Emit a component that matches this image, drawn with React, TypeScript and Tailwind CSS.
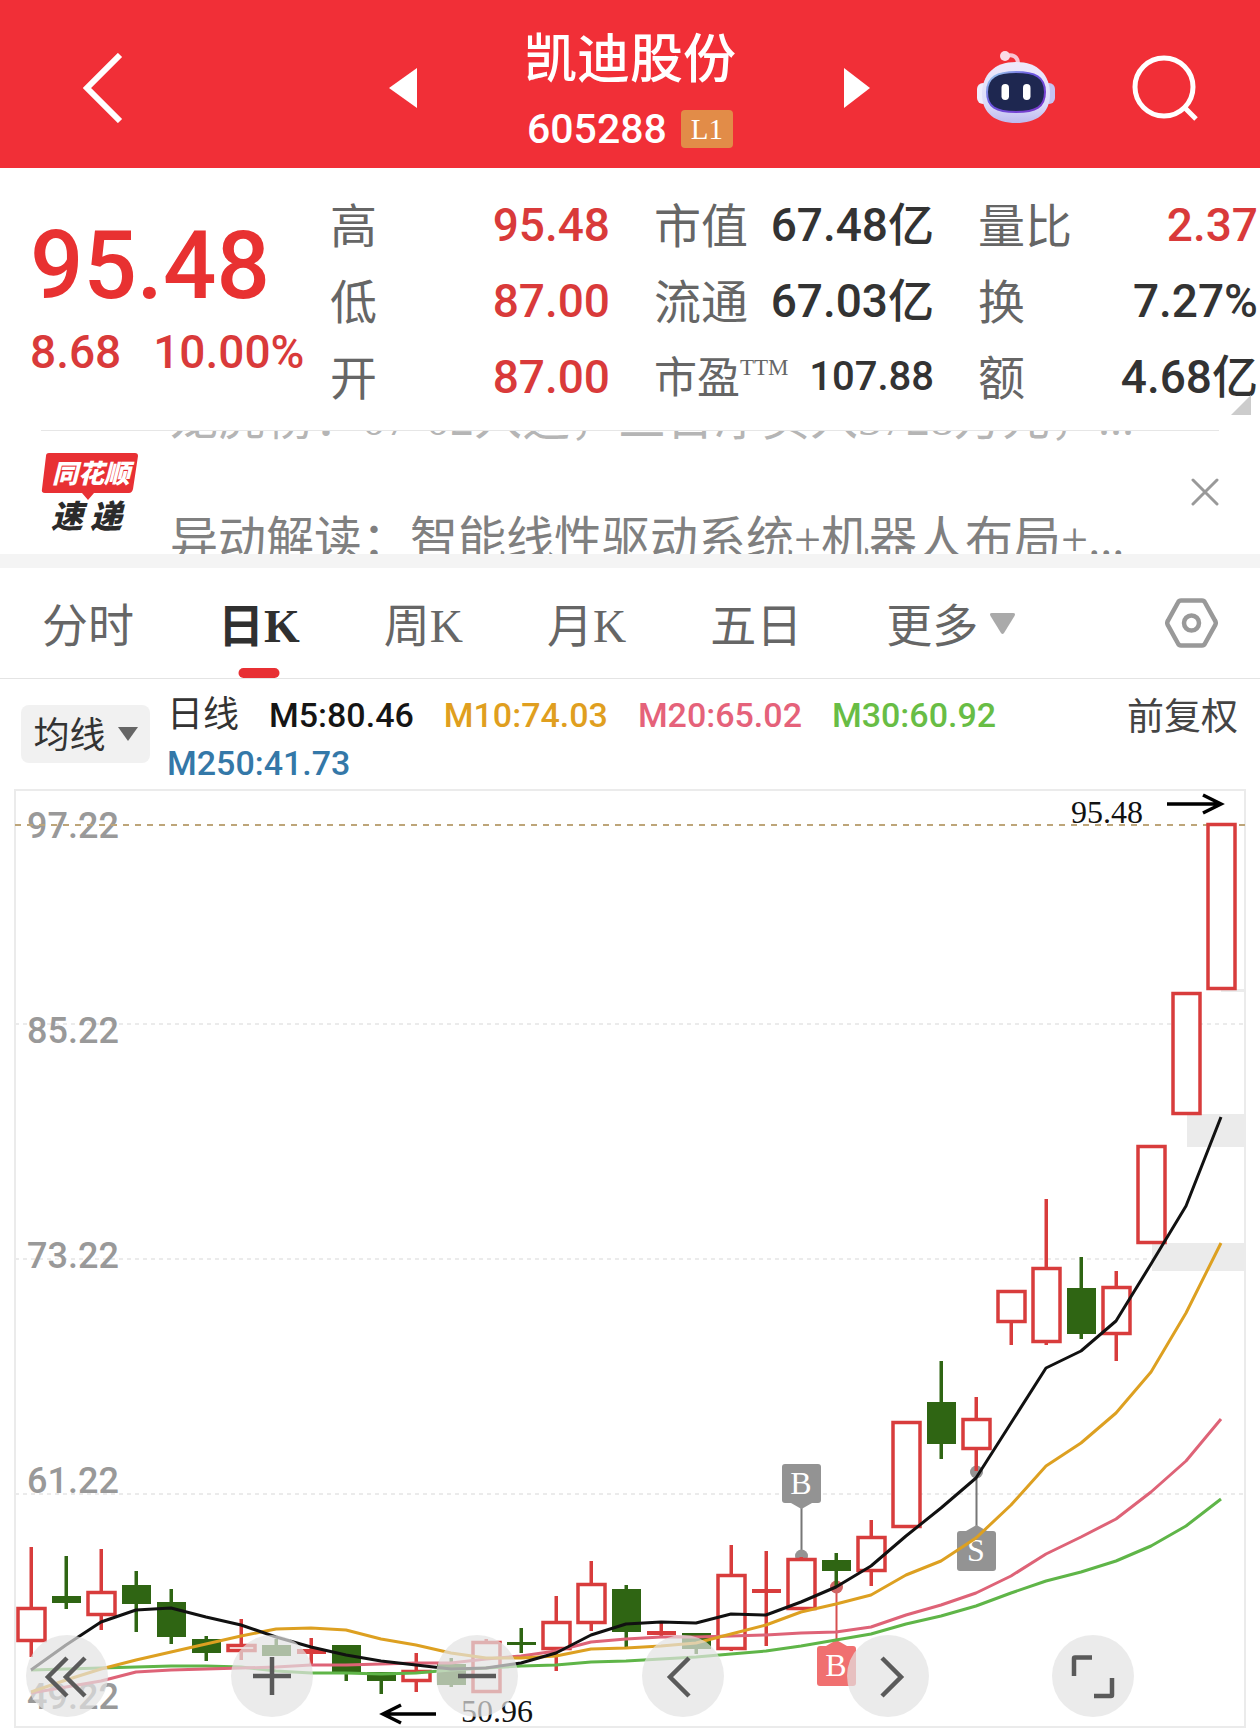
import { useState } from "react";

type Candle = {
  up: boolean;
  high: number;
  top: number;
  bottom: number;
  low: number;
};

const num = "font-['Roboto','Noto_Sans_CJK_SC',sans-serif] font-medium";
const cjk = "font-['Liberation_Serif','Noto_Sans_CJK_SC',serif]";

const STEP = 35;
const FIRST_X = 31;
const RED = "#d83c3c";
const GREEN = "#2f6513";

// up, high, body top, body bottom, low
const rows: [number, number, number, number, number][] = [
  [1, 1547, 1607, 1642, 1657],
  [0, 1556, 1596, 1603, 1609],
  [1, 1549, 1591, 1616, 1630],
  [0, 1571, 1585, 1604, 1632],
  [0, 1589, 1602, 1637, 1644],
  [0, 1636, 1639, 1653, 1661],
  [1, 1619, 1644, 1652, 1660],
  [0, 1639, 1645, 1656, 1656],
  [1, 1638, 1649, 1654, 1664],
  [0, 1645, 1645, 1672, 1681],
  [0, 1672, 1672, 1681, 1694],
  [1, 1653, 1670, 1682, 1692],
  [0, 1658, 1664, 1685, 1687],
  [1, 1639, 1641, 1693, 1693],
  [0, 1628, 1642, 1645, 1653],
  [1, 1596, 1621, 1650, 1671],
  [1, 1561, 1583, 1624, 1631],
  [0, 1585, 1589, 1632, 1647],
  [1, 1623, 1631, 1635, 1637],
  [0, 1633, 1633, 1649, 1654],
  [1, 1545, 1574, 1650, 1651],
  [1, 1551, 1589, 1593, 1646],
  [1, 1557, 1558, 1610, 1610],
  [0, 1553, 1560, 1571, 1587],
  [1, 1520, 1536, 1572, 1586],
  [1, 1421, 1421, 1528, 1528],
  [0, 1361, 1402, 1444, 1459],
  [1, 1397, 1418, 1450, 1471],
  [1, 1290, 1290, 1323, 1345],
  [1, 1199, 1267, 1343, 1345],
  [0, 1257, 1288, 1334, 1339],
  [1, 1271, 1286, 1335, 1361],
  [1, 1145, 1145, 1244, 1244],
  [1, 992, 992, 1115, 1115],
  [1, 823, 823, 990, 990],
];

const candles: Candle[] = rows.map(([up, high, top, bottom, low]) => ({
  up: up === 1,
  high,
  top,
  bottom,
  low,
}));

const averages = [
  {
    color: "#5fb548",
    ys: [1670, 1669, 1668, 1667, 1666, 1666, 1667, 1671, 1673, 1673, 1674, 1673, 1670, 1668, 1666, 1665, 1662, 1661, 1659, 1657, 1654, 1651, 1646, 1640, 1634, 1624, 1616, 1606, 1593, 1581, 1572, 1561, 1546, 1526, 1499],
  },
  {
    color: "#de6377",
    ys: [1693, 1687, 1681, 1672, 1670, 1669, 1668, 1667, 1665, 1665, 1664, 1663, 1663, 1659, 1656, 1651, 1642, 1639, 1637, 1637, 1636, 1635, 1633, 1632, 1627, 1615, 1605, 1593, 1576, 1554, 1537, 1519, 1492, 1461, 1419],
  },
  {
    color: "#dda021",
    ys: [1692, 1680, 1669, 1660, 1652, 1644, 1636, 1629, 1628, 1630, 1639, 1645, 1653, 1658, 1658, 1656, 1649, 1648, 1646, 1643, 1634, 1625, 1612, 1604, 1595, 1575, 1561, 1538, 1505, 1466, 1443, 1413, 1372, 1313, 1243],
  },
  {
    color: "#111111",
    ys: [1670, 1645, 1622, 1610, 1608, 1617, 1625, 1637, 1647, 1655, 1661, 1665, 1669, 1668, 1663, 1653, 1635, 1624, 1622, 1623, 1614, 1615, 1602, 1587, 1566, 1536, 1508, 1478, 1423, 1368, 1351, 1321, 1264, 1206, 1117],
  },
];

const axis = [
  { label: "97.22", y: 838 },
  { label: "85.22", y: 1043 },
  { label: "73.22", y: 1268 },
  { label: "61.22", y: 1493 },
  { label: "49.22", y: 1709 },
];

const tabs = ["分时", "日K", "周K", "月K", "五日"];

const legend = [
  { text: "M5:80.46", className: "text-[#151515]" },
  { text: "M10:74.03", className: "text-[#e09f1f]" },
  { text: "M20:65.02", className: "text-[#e5627a]" },
  { text: "M30:60.92", className: "text-[#68bd45]" },
];

function Header() {
  return (
    <header className="grid h-[168px] grid-cols-3 bg-[#f12f37] text-white">
      <div className="flex items-center justify-between pt-[8px] pl-[83px] pr-[3px]">
        <button type="button" aria-label="返回">
          <svg width="40" height="70" viewBox="0 0 40 70" fill="none" stroke="currentColor" strokeWidth="6">
            <path d="M37 2 4 35l33 33" />
          </svg>
        </button>
        <button type="button" aria-label="上一只">
          <svg width="28" height="40" viewBox="0 0 28 40" fill="currentColor">
            <path d="M28 0v40L0 20z" />
          </svg>
        </button>
      </div>
      <div className="flex flex-col items-center gap-[20px] pt-[25px]">
        <h1 className="font-['Noto_Sans_CJK_SC',sans-serif] text-[53px] leading-[60px] font-medium">凯迪股份</h1>
        <div className="flex items-center gap-[14px]">
          <span className={`${num} text-[41px] leading-[48px]`}>605288</span>
          <span className={`${cjk} rounded bg-[#e28c48] px-[10px] text-[29px] leading-[38px]`}>L1</span>
        </div>
      </div>
      <div className="flex items-center justify-between pt-[8px] pr-[61px] pl-1">
        <button type="button" aria-label="下一只">
          <svg width="26" height="40" viewBox="0 0 26 40" fill="currentColor">
            <path d="M0 0v40l26-20z" />
          </svg>
        </button>
        <div className="flex items-center gap-[77px]">
          <button type="button" aria-label="智能助手">
            <Robot />
          </button>
          <button type="button" aria-label="搜索">
            <svg width="67" height="67" viewBox="0 0 67 67" fill="none" stroke="currentColor" strokeWidth="5">
              <circle cx="32" cy="32" r="29" />
              <path d="m52 52 12 12" />
            </svg>
          </button>
        </div>
      </div>
    </header>
  );
}

function Robot() {
  return (
    <svg width="78" height="74" viewBox="0 0 78 74" fill="none">
      <defs>
        <linearGradient id="shell" x1="0" y1="0" x2="0" y2="1">
          <stop offset="0" stopColor="#efe9fb" />
          <stop offset="0.7" stopColor="#dcdcfa" />
          <stop offset="1" stopColor="#bdb9ee" />
        </linearGradient>
        <linearGradient id="rim" x1="0" y1="0" x2="1" y2="1">
          <stop offset="0" stopColor="#a6e0ee" />
          <stop offset="0.4" stopColor="#6a56e0" />
          <stop offset="1" stopColor="#7a35c8" />
        </linearGradient>
      </defs>
      <path d="M29 5c6-2 12 0 12 8" stroke="#f8c4d2" strokeWidth="4" />
      <circle cx="28" cy="5" r="5" fill="#fbdbe6" />
      <rect x="0" y="32" width="12" height="21" rx="6" fill="#efedfd" />
      <rect x="66" y="32" width="12" height="21" rx="6" fill="#c5c2f2" />
      <path d="M39 11c22 0 34 13 34 32 0 20-14 29-34 29S5 63 5 43c0-19 12-32 34-32z" fill="url(#shell)" />
      <path d="M39 21c19 0 29 5 29 20S59 61 39 61 10 56 10 41s10-20 29-20z" fill="#1e2750" stroke="url(#rim)" strokeWidth="2" />
      <rect x="24.500" y="33" width="7.500" height="16" rx="3.700" fill="#fff" />
      <rect x="46" y="33" width="7.500" height="16" rx="3.700" fill="#fff" />
    </svg>
  );
}

function Stat({ label, value, red }: { label: string; value: string; red?: boolean }) {
  return (
    <div className="flex h-[76px] items-center justify-between whitespace-nowrap">
      <dt className={`${cjk} pt-1 text-[47px] leading-[60px] text-[#666]`}>{label}</dt>
      <dd className={`${num} text-[46px] leading-[60px] ${red ? "text-[#d93a3a]" : "text-[#333]"}`}>{value}</dd>
    </div>
  );
}

function Quote() {
  return (
    <section className="relative grid h-[262px] grid-cols-[minmax(0,256fr)_minmax(0,280fr)_minmax(0,280fr)_minmax(0,280fr)] gap-x-11 pt-[19px] pr-[2px] pl-[30px]">
      <div className={`${num} whitespace-nowrap`}>
        <p className="pt-[29px] text-[94px] leading-[100px] text-[#e83131]">95.48</p>
        <p className="flex gap-8 pt-[6px] text-[46px] leading-[60px] text-[#d93a3a]">
          <span>8.68</span>
          <span>10.00%</span>
        </p>
      </div>
      <dl>
        <Stat label="高" value="95.48" red />
        <Stat label="低" value="87.00" red />
        <Stat label="开" value="87.00" red />
      </dl>
      <dl>
        <Stat label="市值" value="67.48亿" />
        <Stat label="流通" value="67.03亿" />
        <div className="flex h-[76px] items-center justify-between whitespace-nowrap">
          <dt className={`${cjk} flex items-start pt-1 text-[43px] leading-[60px] text-[#666]`}>
            市盈<span className="text-[23px] leading-[38px]">TTM</span>
          </dt>
          <dd className={`${num} text-[40px] leading-[60px] text-[#333]`}>107.88</dd>
        </div>
      </dl>
      <dl>
        <Stat label="量比" value="2.37" red />
        <Stat label="换" value="7.27%" />
        <Stat label="额" value="4.68亿" />
      </dl>
      <svg className="absolute right-[9px] bottom-[15px]" width="20" height="20" viewBox="0 0 20 20" fill="#ccc">
        <path d="M20 0v20H0z" />
      </svg>
    </section>
  );
}

function News({ onClose }: { onClose: () => void }) {
  return (
    <section className="relative mx-[41px] flex h-[124px] border-t border-[#e6e6e6]">
      <svg className="mt-[21px] shrink-0" width="98" height="82" viewBox="0 0 98 82">
        <path d="M8 1h86q3 0 3 3l-5 33q-1 4-4 4H53l-6 7-6-7H4q-4 0-3-4L5 4q0-3 3-3z" fill="#e83034" />
        <g className="font-['Noto_Sans_CJK_SC',sans-serif] font-black italic">
          <text x="11" y="31" fontSize="26" fill="#fff">同花顺</text>
          <text x="10" y="76" fontSize="32" fill="#2b2b2b">速</text>
          <text x="49" y="76" fontSize="32" fill="#2b2b2b">递</text>
        </g>
      </svg>
      <div className={`${cjk} ml-[31px] min-w-0 flex-1 overflow-hidden text-[48px] whitespace-nowrap`}>
        <p className="-mt-[42px] leading-[60px] text-[#b5b5b5]">龙虎榜：07-02入选，三日净买入3728万元，...</p>
        <p className="mt-[61px] leading-[60px] text-[#808080]">异动解读：智能线性驱动系统+机器人布局+...</p>
      </div>
      <button type="button" aria-label="关闭" onClick={onClose} className="mt-[47px] self-start">
        <svg width="28" height="28" viewBox="0 0 28 28" fill="none" stroke="#999" strokeWidth="3" strokeLinecap="round">
          <path d="m2 2 24 24M26 2 2 26" />
        </svg>
      </button>
    </section>
  );
}

function Tabs({ active, onSelect }: { active: string; onSelect: (tab: string) => void }) {
  return (
    <nav className={`${cjk} flex h-[111px] items-center justify-between border-b border-[#e4e4e4] pr-[42px] pl-[42px] text-[46px] leading-[60px] text-[#666]`}>
      <div className="flex h-full gap-[84px]">
        {tabs.map((tab) => (
          <button
            key={tab}
            type="button"
            onClick={() => onSelect(tab)}
            className={`relative flex h-full items-center pt-2 whitespace-nowrap ${active === tab ? "font-bold text-[#303030]" : ""}`}
          >
            {tab}
            {active === tab && (
              <span className="absolute bottom-0 left-1/2 h-[10px] w-[41px] -translate-x-1/2 rounded-full bg-[#e83034]" />
            )}
          </button>
        ))}
        <button type="button" aria-haspopup="menu" className="flex items-center gap-[12px] whitespace-nowrap">
          <span className="pt-2">更多</span>
          <svg width="25" height="21" viewBox="0 0 25 21" fill="#aaa">
            <path d="M2 0h21q3 0 1.500 3L14 20q-1.500 2-3 0L.5 3Q-1 0 2 0z" />
          </svg>
        </button>
      </div>
      <button type="button" aria-label="设置">
        <svg width="53" height="50" viewBox="0 0 53 50" fill="none" stroke="#999" strokeWidth="4.500">
          <path d="M16 2.500h21q2 0 3 2l10 18q1.500 2.500 0 5l-10 18q-1 2-3 2H16q-2 0-3-2l-10-18q-1.500-2.500 0-5l10-18q1-2 3-2z" />
          <circle cx="26.500" cy="25" r="7.500" />
        </svg>
      </button>
    </nav>
  );
}

function Averages() {
  return (
    <section className="flex h-[109px] items-start pr-[22px] pl-[21px]">
      <button
        type="button"
        aria-haspopup="listbox"
        className={`${cjk} mt-[26px] flex h-[58px] w-[129px] shrink-0 items-center justify-center gap-[12px] rounded-lg bg-[#f1f1f1] text-[36px] text-[#333]`}
      >
        <span className="pt-1">均线</span>
        <svg width="20" height="14" viewBox="0 0 20 14" fill="#666">
          <path d="M0 0h20L10 14z" />
        </svg>
      </button>
      <div className={`${num} ml-[17px] flex flex-1 flex-wrap gap-x-[30px] pt-[12px] text-[34px] leading-[48px]`}>
        <span className="text-[36px] font-normal text-[#333]">日线</span>
        {legend.map((item) => (
          <span key={item.text} className={item.className}>
            {item.text}
          </span>
        ))}
        <span className="text-[#3478a8]">M250:41.73</span>
      </div>
      <button type="button" className={`${cjk} mt-[12px] shrink-0 text-[37px] leading-[54px] text-[#444]`}>
        前复权
      </button>
    </section>
  );
}

function CandleShape({ candle, x }: { candle: Candle; x: number }) {
  const color = candle.up ? RED : GREEN;
  const height = candle.bottom - candle.top;
  return (
    <g>
      {candle.top > candle.high && <rect x={x - 1.5} y={candle.high} width="3.5" height={candle.top - candle.high} fill={color} />}
      {candle.low > candle.bottom && <rect x={x - 1.5} y={candle.bottom} width="3.5" height={candle.low - candle.bottom} fill={color} />}
      {candle.up && height > 5 ? (
        <rect x={x - 13} y={candle.top + 1.5} width="27" height={height - 3} fill="#fff" stroke={color} strokeWidth="3.5" />
      ) : (
        <rect x={x - 14} y={candle.top} width="29" height={height} fill={color} />
      )}
    </g>
  );
}

function Chart() {
  return (
    <svg className="block h-auto w-full" viewBox="0 788 1260 940" role="img" aria-label="日K线">
      <rect x="15" y="790" width="1230" height="937" fill="#fff" stroke="#ebebeb" strokeWidth="2" />
      <g fill="#ebebeb">
        <rect x="1221" y="989" width="25" height="3" />
        <rect x="1187" y="1114" width="59" height="33" />
        <rect x="1152" y="1243" width="94" height="28" />
      </g>
      <g stroke="#ebebeb" strokeWidth="2" strokeDasharray="4 4">
        <path d="M15 1024h1231M15 1259h1231M15 1494h1231" />
      </g>
      <g className="font-['Roboto',sans-serif] font-medium" fontSize="36" fill="#999">
        {axis.map((tick) => (
          <text key={tick.label} x="27" y={tick.y}>
            {tick.label}
          </text>
        ))}
      </g>
      <path d="M15 825h1231" stroke="#bda579" strokeWidth="2" strokeDasharray="6 6" />

      <g stroke="#777" strokeWidth="2">
        <path d="M801.500 1508v48M976.500 1472v56" />
        <path d="M836.500 1587v56" stroke="#d65050" />
      </g>
      <circle cx="801.500" cy="1556" r="6.500" fill="#939393" />
      <circle cx="976.500" cy="1472" r="6.500" fill="#939393" />
      <circle cx="836.500" cy="1587" r="6.500" fill="#d06464" />
      <path d="M791 1503h21l-10.500 6z" fill="#939393" />
      <rect x="782" y="1464" width="39" height="39" rx="3" fill="#939393" />
      <path d="M966 1531h21l-10.500-6z" fill="#939393" />
      <rect x="957" y="1531" width="39" height="40" rx="3" fill="#939393" />
      <path d="M826 1646h21l-10.500-6z" fill="#f07070" />
      <rect x="817" y="1646" width="39" height="40" rx="3" fill="#f07070" />

      {candles.map((candle, i) => (
        <CandleShape key={i} candle={candle} x={FIRST_X + i * STEP} />
      ))}
      <g className="font-['Liberation_Serif',serif]" fontSize="32" fill="#fff" textAnchor="middle">
        <text x="801" y="1494">B</text>
        <text x="976" y="1561">S</text>
        <text x="836" y="1676">B</text>
      </g>
      {averages.map((line) => (
        <polyline
          key={line.color}
          points={line.ys.map((y, i) => `${FIRST_X + i * STEP},${y}`).join(" ")}
          fill="none"
          stroke={line.color}
          strokeWidth="3"
          strokeLinejoin="round"
        />
      ))}

      <g className="font-['Liberation_Serif',serif]" fontSize="32" fill="#111">
        <text x="1071" y="823">95.48</text>
        <text x="461" y="1722">50.96</text>
      </g>
      <g fill="none" stroke="#000" strokeWidth="3.500">
        <path d="M1167 804h53M1203 795l18 9-18 9" />
        <path d="M436 1714h-53M401 1705l-18 9 18 9" />
      </g>
    </svg>
  );
}

const controls = [
  { label: "最早", path: "M41 23 22 42l19 19M59 23 40 42l19 19" },
  { label: "放大", path: "M22 41h38M41 22v38" },
  { label: "缩小", path: "M22 41h38" },
  { label: "向左", path: "M47 23 28 42l19 19" },
  { label: "向右", path: "m35 23 19 19-19 19" },
  { label: "全屏", path: "M40 22.500H23q-1 0-1 1V41M42 61h17q1 0 1-1V43" },
];

function Controls() {
  return (
    <div className="absolute inset-x-0 bottom-[11px] flex justify-between pr-[126px] pl-[26px]">
      {controls.map((control) => (
        <button key={control.label} type="button" aria-label={control.label} className="rounded-full bg-[#e2e2e2]/70">
          <svg width="82" height="82" viewBox="0 0 82 82" fill="none" stroke="#5a5a5a" strokeWidth="4.500">
            <path d={control.path} />
          </svg>
        </button>
      ))}
    </div>
  );
}

export default function App() {
  const [tab, setTab] = useState("日K");
  const [showNews, setShowNews] = useState(true);

  return (
    <main className="min-h-screen overflow-x-hidden bg-white">
      <Header />
      <Quote />
      {showNews && <News onClose={() => setShowNews(false)} />}
      <div className="h-[14px] bg-[#f4f4f4]" />
      <Tabs active={tab} onSelect={setTab} />
      <Averages />
      <div className="relative">
        <Chart />
        <Controls />
      </div>
    </main>
  );
}
